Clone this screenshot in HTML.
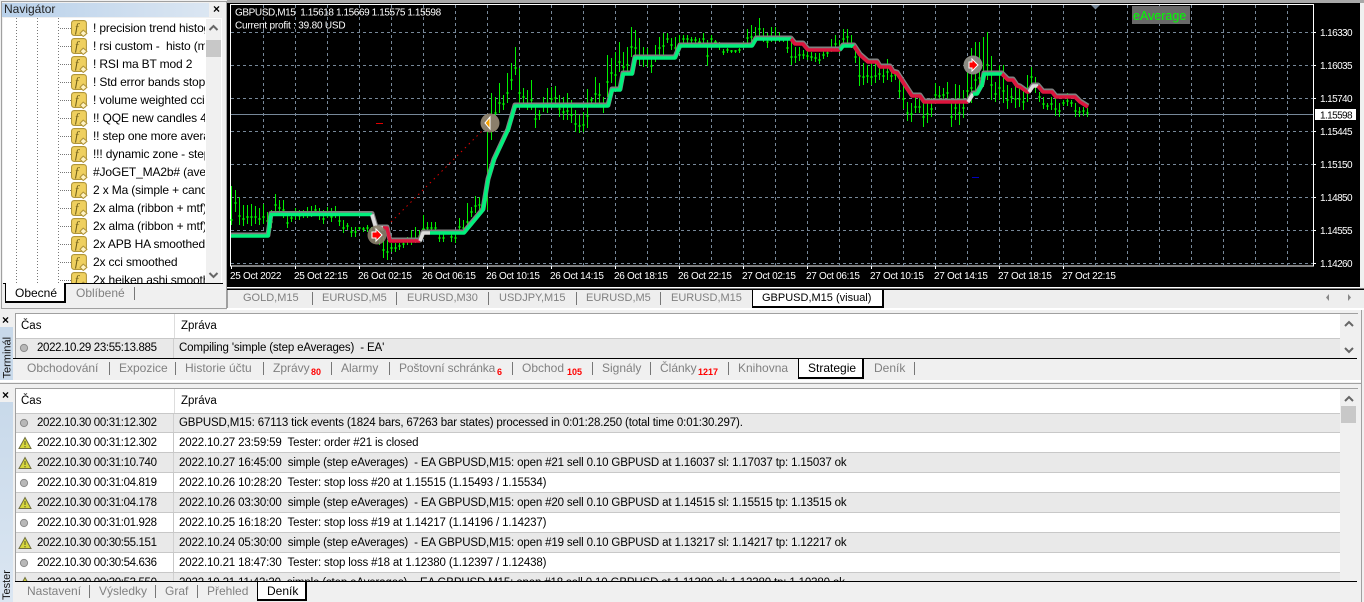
<!DOCTYPE html>
<html><head><meta charset="utf-8"><style>
html,body{margin:0;padding:0;width:1364px;height:602px;overflow:hidden;background:#f0f0f0;}
body{position:relative;font-family:"Liberation Sans",sans-serif;font-size:12px;color:#000;}
div,span,svg{position:absolute;}
.t{white-space:pre;line-height:14px;height:14px;}
.g{color:#808080;}
.sep{width:1px;background:#777;}
.b{color:#f00;font-weight:bold;font-size:9px;line-height:10px;white-space:pre;}
.ct{font-size:11px;}
.row{left:15px;width:1325px;height:19px;border-bottom:1px solid #c8c8c8;overflow:hidden;}
.row.e{background:#e9e9e9;}
.row .a{left:22px;top:3px;font-size:11.5px;letter-spacing:-.36px;}
.row .m{left:164px;top:3px;font-size:11.5px;letter-spacing:-.15px;}
.row .d{left:158px;top:0;width:1px;height:20px;background:#c8c8c8;}
.row.e .d{background:#d0d0d0;}
.nav{left:93px;width:112px;overflow:hidden;font-size:12px;letter-spacing:-.15px;line-height:18px;height:18px;white-space:pre;}
.act{background:#fff;border:1px solid #000;border-top:1px solid #000;border-right:2px solid #000;border-bottom:2px solid #000;box-sizing:border-box;}
</style></head><body>
<svg width="0" height="0" style="left:0;top:0">
<defs>
<symbol id="fi" viewBox="0 0 16 16"><rect x=".5" y=".5" width="14" height="14" rx="2.5" fill="#efd05f" stroke="#b0953a"/><text x="3.6" y="11.5" font-family="Liberation Serif" font-style="italic" font-size="12" fill="#6e5e18">f</text><path d="M11.5 9.5l3.5 3-3.5 3-3-3z" fill="#fff3c4" stroke="#b0953a"/></symbol>
<symbol id="w" viewBox="0 0 14 14"><path d="M7 1.5L13 12.5H1z" fill="#d6d63c" stroke="#6e6e40"/><path d="M7 5v4M7 10v1.4" stroke="#55552a"/></symbol>
<symbol id="c" viewBox="0 0 10 10"><circle cx="5" cy="5" r="3.6" fill="#b8b8b8" stroke="#8a8a8a"/></symbol>
</defs></svg>

<!-- Navigator -->
<div style="left:1px;top:1px;width:224px;height:306px;border:1px solid #a0a0a0;background:#f0f0f0"></div>
<div style="left:2px;top:3px;width:207px;height:14px;background:linear-gradient(90deg,#b9d1ea,#dbe6f2)"></div>
<div class="t" style="left:4px;top:2px;font-size:12px;color:#222">Navigátor</div>
<div class="t" style="left:213px;top:2px;font-weight:bold;font-size:12px">×</div>
<div style="left:3px;top:18px;width:219px;height:265px;background:#fff;overflow:hidden">
<svg width="219" height="265" style="left:0;top:0">
<path d="M13.5 0V265M34.5 0V265M55.5 0V265" stroke="#777" stroke-dasharray="1 2"/>
<path d="M57 10.500h11M57 28.500h11M57 46.500h11M57 64.500h11M57 82.500h11M57 100.500h11M57 118.500h11M57 136.500h11M57 154.500h11M57 172.500h11M57 190.500h11M57 208.500h11M57 226.500h11M57 244.500h11M57 262.500h11" stroke="#777" stroke-dasharray="1 1"/>
</svg>
<svg style="left:68px;top:2px" width="17" height="17"><use href="#fi"/></svg>
<svg style="left:68px;top:20px" width="17" height="17"><use href="#fi"/></svg>
<svg style="left:68px;top:38px" width="17" height="17"><use href="#fi"/></svg>
<svg style="left:68px;top:56px" width="17" height="17"><use href="#fi"/></svg>
<svg style="left:68px;top:74px" width="17" height="17"><use href="#fi"/></svg>
<svg style="left:68px;top:92px" width="17" height="17"><use href="#fi"/></svg>
<svg style="left:68px;top:110px" width="17" height="17"><use href="#fi"/></svg>
<svg style="left:68px;top:128px" width="17" height="17"><use href="#fi"/></svg>
<svg style="left:68px;top:146px" width="17" height="17"><use href="#fi"/></svg>
<svg style="left:68px;top:164px" width="17" height="17"><use href="#fi"/></svg>
<svg style="left:68px;top:182px" width="17" height="17"><use href="#fi"/></svg>
<svg style="left:68px;top:200px" width="17" height="17"><use href="#fi"/></svg>
<svg style="left:68px;top:218px" width="17" height="17"><use href="#fi"/></svg>
<svg style="left:68px;top:236px" width="17" height="17"><use href="#fi"/></svg>
<svg style="left:68px;top:254px" width="17" height="17"><use href="#fi"/></svg>
</div>
<div style="left:0;top:0;width:226px;height:283px;overflow:hidden">
<div class="nav" style="top:19px">! precision trend histogram</div>
<div class="nav" style="top:37px">! rsi custom -  histo (mtf)</div>
<div class="nav" style="top:55px">! RSI ma BT mod 2</div>
<div class="nav" style="top:73px">! Std error bands stop</div>
<div class="nav" style="top:91px">! volume weighted cci</div>
<div class="nav" style="top:109px">!! QQE new candles 4</div>
<div class="nav" style="top:127px">!! step one more average</div>
<div class="nav" style="top:145px">!!! dynamic zone - step</div>
<div class="nav" style="top:163px">#JoGET_MA2b# (average)</div>
<div class="nav" style="top:181px">2 x Ma (simple + candles)</div>
<div class="nav" style="top:199px">2x alma (ribbon + mtf)</div>
<div class="nav" style="top:217px">2x alma (ribbon + mtf)</div>
<div class="nav" style="top:235px">2x APB HA smoothed</div>
<div class="nav" style="top:253px">2x cci smoothed</div>
<div class="nav" style="top:271px">2x heiken ashi smoothed</div>
</div>
<div style="left:206px;top:19px;width:15px;height:264px;background:#f0f0f0"></div>
<div style="left:206px;top:40px;width:15px;height:17px;background:#c8c8c8"></div>
<svg style="left:206px;top:22px" width="15" height="262"><path d="M3.5 8l4-4 4 4" fill="none" stroke="#666" stroke-width="2"/><path d="M3.5 251l4 4 4-4" fill="none" stroke="#666" stroke-width="2"/></svg>
<div style="left:3px;top:283px;width:220px;height:1px;background:#000"></div>
<div class="act" style="left:5px;top:283px;width:61px;height:20px;border-top:0"></div>
<div class="t" style="left:15px;top:286px;font-size:12px">Obecné</div>
<div class="t g" style="left:76px;top:286px;font-size:12px">Oblíbené</div>
<div class="sep" style="left:134px;top:287px;height:13px"></div>

<!-- Chart -->
<svg style="left:227px;top:0" width="1137" height="291" viewBox="227 0 1137 291">
<rect x="227" y="0" width="1137" height="3" fill="#a8a8a8"/>
<rect x="227" y="3" width="1133" height="284" fill="#000"/>
<rect x="227" y="287" width="1133" height="1" fill="#fff"/>
<rect x="227" y="288.5" width="1137" height="1.5" fill="#000"/>
<rect x="230.5" y="4.5" width="1083" height="261.5" fill="none" stroke="#fff"/>
<path d="M231 32.5H1313M231 65.5H1313M231 98.5H1313M231 131.5H1313M231 164.5H1313M231 197.5H1313M231 230.5H1313M231 263.5H1313" stroke="#778899" stroke-dasharray="3 3"/>
<path d="M263.5 5V266M295.5 5V266M327.5 5V266M359.5 5V266M391.5 5V266M423.5 5V266M455.5 5V266M487.5 5V266M519.5 5V266M551.5 5V266M583.5 5V266M615.5 5V266M647.5 5V266M679.5 5V266M711.5 5V266M743.5 5V266M775.5 5V266M807.5 5V266M839.5 5V266M871.5 5V266M903.5 5V266M935.5 5V266M967.5 5V266M999.5 5V266M1031.5 5V266M1063.5 5V266M1095.5 5V266M1127.5 5V266M1159.5 5V266M1191.5 5V266M1223.5 5V266M1255.5 5V266M1287.5 5V266" stroke="#778899" stroke-dasharray="3 3"/>
<path d="M231 114.5H1313" stroke="#778899"/>
<path d="M1091 5h9l-4.500 4.500z" fill="#778899"/>
<path d="M231.500 266v3M295.500 266v3M359.500 266v3M423.500 266v3M487.500 266v3M551.500 266v3M615.500 266v3M679.500 266v3M743.500 266v3M807.500 266v3M871.500 266v3M935.500 266v3M999.500 266v3M1063.500 266v3" stroke="#fff"/>
<path d="M1313 32.500h3M1313 65.500h3M1313 98.500h3M1313 131.500h3M1313 164.500h3M1313 197.500h3M1313 230.500h3M1313 263.500h3" stroke="#fff"/>
<!-- bars -->
<path fill="none" stroke="#00f000" shape-rendering="crispEdges" d="M231.500 186V225m-1.500-5h3M235.500 190V212m-1.500-9h3M239.500 197V225m-1.500-9h3M243.500 205V226m-1.500-7h3M247.500 205V224m-1.500-7h3M251.500 204V226m-1.500-9h3M255.500 206V224m-1.500-7h3M259.500 208V225m-1.500-6h3M263.500 204V224m-1.500-7h3M267.500 212V226m-1.500-5h3M271.500 210V228m-1.500-6h3M275.500 194V214m-1.500-9h3M279.500 200V216m-1.500-8h3M283.500 200V218m-1.500-8h3M287.500 216V228m-1.500-5h3M291.500 212V222m-1.500-4h3M295.500 208V220m-1.500-5h3M299.500 210V220m-1.500-4h3M303.500 210V218m-1.500-4h3M307.500 207V218m-1.500-5h3M311.500 206V217m-1.500-5h3M315.500 205V215m-1.500-5h3M319.500 208V220m-1.500-5h3M323.500 210V224m-1.500-5h3M327.500 207V218m-1.500-5h3M331.500 208V222m-1.500-5h3M335.500 206V218m-1.500-5h3M339.500 212V226m-1.500-5h3M343.500 220V233m-1.500-5h3M347.500 223V230m-1.500-4h3M351.500 227V237m-1.500-5h3M355.500 227V237m-1.500-5h3M359.500 227V230m-1.500-2h3M363.500 227V232m-1.500-3h3M367.500 225V232m-1.500-4h3M371.500 227V237m-1.500-5h3M375.500 227V243m-1.500-6h3M379.500 230V245m-1.500-5h3M383.500 237V258m-1.500-8h3M387.500 240V260m-1.500-8h3M391.500 243V252m-1.500-4h3M395.500 243V252m-1.500-4h3M399.500 243V250m-1.500-4h3M403.500 240V248m-1.500-4h3M407.500 237V245m-1.500-4h3M411.500 230V245m-1.500-5h3M415.500 227V243m-1.500-5h3M419.500 230V240m-1.500-4h3M423.500 215V237m-1.500-8h3M427.500 222V232m-1.500-4h3M431.500 222V233m-1.500-5h3M435.500 222V233m-1.500-5h3M439.500 232V242m-1.500-4h3M443.500 232V242m-1.500-4h3M447.500 231V234m-1.500-2h3M451.500 230V242m-1.500-5h3M455.500 233V243m-1.500-5h3M459.500 218V233m-1.500-6h3M463.500 220V233m-1.500-5h3M467.500 203V230m-1.500-8h3M471.500 207V217m-1.500-5h3M475.500 196V213m-1.500-7h3M479.500 197V210m-1.500-5h3M483.500 200V210m-1.500-5h3M487.500 120V210M491.500 93V140m-1.500-20h3M495.500 97V123m-1.500-10h3M499.500 83V113m-1.500-10h3M503.500 95V110m-1.500-6h3M507.500 73V103m-1.500-10h3M511.500 63V90m-1.500-10h3M515.500 47V75m-1.500-7h3M519.500 68V105m-1.500-12h3M523.500 88V103m-1.500-6h3M527.500 90V110m-1.500-7h3M531.500 80V110m-1.500-10h3M535.500 105V128m-1.500-9h3M539.500 110V120m-1.500-5h3M543.500 97V112m-1.500-6h3M547.500 88V113m-1.500-9h3M551.500 87V107m-1.500-8h3M555.500 86V105m-1.500-7h3M559.500 95V117m-1.500-8h3M563.500 97V120m-1.500-8h3M567.500 93V120m-1.500-9h3M571.500 100V123m-1.500-8h3M575.500 110V132m-1.500-8h3M579.500 115V133m-1.500-7h3M583.500 112V132m-1.500-7h3M587.500 89V128m-1.500-12h3M591.500 97V103m-1.500-3h3M595.500 77V103m-1.500-9h3M599.500 83V103m-1.500-8h3M603.500 97V113m-1.500-6h3M607.500 55V97m-1.500-15h3M611.500 58V83m-1.500-10h3M615.500 52V87m-1.500-12h3M619.500 42V72m-1.500-10h3M623.500 52V77m-1.500-10h3M627.500 47V75m-1.500-10h3M631.500 27V57m-1.500-10h3M635.500 30V58m-1.500-10h3M639.500 38V65m-1.500-10h3M643.500 47V67m-1.500-8h3M647.500 48V67m-1.500-8h3M651.500 55V73m-1.500-7h3M655.500 45V62m-1.500-7h3M659.500 37V55m-1.500-7h3M663.500 33V55m-1.500-9h3M667.500 33V43m-1.500-4h3M671.500 38V50m-1.500-5h3M675.500 37V55m-1.500-7h3M679.500 35V50m-1.500-6h3M683.500 35V43m-1.500-4h3M687.500 35V43m-1.500-4h3M691.500 37V43m-1.500-3h3M695.500 37V43m-1.500-3h3M699.500 38V45m-1.500-3h3M703.500 33V43m-1.500-4h3M707.500 40V66m-1.500-10h3M711.500 35V43m-1.500-4h3M715.500 40V45m-1.500-3h3M719.500 42V50m-1.500-4h3M723.500 49V55m-1.500-3h3M727.500 48V53m-1.500-3h3M731.500 50V53m-1.500-2h3M735.500 50V53m-1.500-2h3M739.500 48V53m-1.500-3h3M743.500 42V48m-1.500-3h3M747.500 29V43m-1.500-5h3M751.500 25V45m-1.500-8h3M755.500 27V43m-1.500-6h3M759.500 18V37m-1.500-8h3M763.500 28V42m-1.500-6h3M767.500 33V48m-1.500-6h3M771.500 27V42m-1.500-6h3M775.500 27V42m-1.500-6h3M779.500 32V42m-1.500-5h3M783.500 38V42m-1.500-2h3M787.500 40V53m-1.500-5h3M791.500 42V65m-1.500-8h3M795.500 47V63m-1.500-6h3M799.500 47V61m-1.500-6h3M803.500 50V59m-1.500-4h3M807.500 50V60m-1.500-4h3M811.500 52V61m-1.500-4h3M815.500 53V62m-1.500-4h3M819.500 53V64m-1.500-4h3M823.500 50V59m-1.500-4h3M827.500 47V57m-1.500-4h3M831.500 39V52m-1.500-5h3M835.500 35V50m-1.500-6h3M839.500 40V53m-1.500-5h3M843.500 29V45m-1.500-6h3M847.500 29V43m-1.500-6h3M851.500 35V48m-1.500-5h3M855.500 47V63m-1.500-6h3M859.500 55V86m-1.500-10h3M863.500 63V85m-1.500-8h3M867.500 65V83m-1.500-7h3M871.500 62V85m-1.500-8h3M875.500 62V83m-1.500-7h3M879.500 65V80m-1.500-6h3M883.500 65V83m-1.500-7h3M887.500 59V80m-1.500-8h3M891.500 68V82m-1.500-6h3M895.500 70V80m-1.500-5h3M899.500 80V98m-1.500-7h3M903.500 83V109m-1.500-10h3M907.500 102V121m-1.500-8h3M911.500 103V122m-1.500-8h3M915.500 97V113m-1.500-6h3M919.500 98V113m-1.500-6h3M923.500 100V127m-1.500-10h3M927.500 100V123m-1.500-9h3M931.500 98V117m-1.500-8h3M935.500 83V103m-1.500-8h3M939.500 86V103m-1.500-7h3M943.500 88V100m-1.500-5h3M947.500 82V100m-1.500-7h3M951.500 100V127m-1.500-10h3M955.500 84V120m-1.500-12h3M959.500 85V125m-1.500-12h3M963.500 90V118m-1.500-10h3M967.500 65V103m-1.500-12h3M971.500 48V103m-1.500-15h3M975.500 42V95m-1.500-15h3M979.500 42V93m-1.500-15h3M983.500 37V87m-1.500-15h3M987.500 32V80m-1.500-15h3M991.500 56V100m-1.500-15h3M995.500 82V102m-1.500-8h3M999.500 65V100m-1.500-12h3M1003.500 65V103m-1.500-12h3M1007.500 85V109m-1.500-9h3M1011.500 88V103m-1.500-6h3M1015.500 85V108m-1.500-9h3M1019.500 88V107m-1.500-8h3M1023.500 90V110m-1.500-8h3M1027.500 75V102m-1.500-10h3M1031.500 67V90m-1.500-13h3M1035.500 77V93m-1.500-6h3M1039.500 92V102m-1.500-5h3M1043.500 97V109m-1.500-5h3M1047.500 103V110m-1.500-4h3M1051.500 97V110m-1.500-6h3M1055.500 98V116m-1.500-7h3M1059.500 103V117m-1.500-6h3M1063.500 100V106m-1.500-3h3M1067.500 93V106m-1.500-5h3M1071.500 100V107m-1.500-4h3M1075.500 103V117m-1.500-6h3M1079.500 107V117m-1.500-5h3M1083.500 107V116m-1.500-5h3M1087.500 108V117m-1.500-4h3"/>
<!-- gray under line -->
<polyline transform="translate(0,-1)" fill="none" stroke="#808080" stroke-width="5" stroke-linejoin="round" points="231,236 268,236 271,214.500 372,214.500 376,228 387,228 390,241 420,241 423,233 464,233 483,210 488,180 494,160 508,130 515,106 608,106 612,90 620,90 623,74 632,74 635,58 675,58 680,46 752,46 756,39 791,39 795,44 803,44 808,50 840,50 843,46 854,46 860,55 868,62 877,62 880,67 890,67 893,72 897,73 912,96 920,96 924,102 968,102 973,94 977,94 982,85 984,74 1002,74 1008,80 1013,80 1017,86 1020,87 1027,92 1029,92 1033,86 1038,86 1043,92 1052,92 1056,97 1075,97 1080,102 1088,107"/>
<polyline fill="none" stroke="#00f07c" stroke-width="3.500" stroke-linejoin="round" points="231,236 268,236 271,214.500 372,214.500"/>
<polyline fill="none" stroke="#dcdcdc" stroke-width="3.500" stroke-linejoin="round" points="372,214.500 376,228 383,228"/>
<polyline fill="none" stroke="#dc143c" stroke-width="3.500" stroke-linejoin="round" points="383,228 387,228 390,241 420,241"/>
<polyline fill="none" stroke="#dcdcdc" stroke-width="3.500" stroke-linejoin="round" points="420,241 423,233 430,233"/>
<polyline fill="none" stroke="#00f07c" stroke-width="3.500" stroke-linejoin="round" points="430,233 464,233 483,210 488,180 494,160 508,130 515,106 608,106 612,90 620,90 623,74 632,74 635,58 675,58 680,46 752,46 756,39 791,39"/>
<polyline fill="none" stroke="#dc143c" stroke-width="3.500" stroke-linejoin="round" points="791,39 795,44 803,44 808,50 840,50"/>
<polyline fill="none" stroke="#00f07c" stroke-width="3.500" stroke-linejoin="round" points="840,50 843,46 854,46"/>
<polyline fill="none" stroke="#dc143c" stroke-width="3.500" stroke-linejoin="round" points="854,46 860,55 868,62 877,62 880,67 890,67 893,72 897,73 912,96 920,96 924,102 968,102"/>
<polyline fill="none" stroke="#dcdcdc" stroke-width="3.500" stroke-linejoin="round" points="968,102 973,94"/>
<polyline fill="none" stroke="#00f07c" stroke-width="3.500" stroke-linejoin="round" points="973,94 977,94 982,85 984,74 1002,74"/>
<polyline fill="none" stroke="#dc143c" stroke-width="3.500" stroke-linejoin="round" points="1002,74 1008,80 1013,80 1017,86 1020,87 1027,92 1029,92"/>
<polyline fill="none" stroke="#dcdcdc" stroke-width="3.500" stroke-linejoin="round" points="1029,92 1033,86 1038,86"/>
<polyline fill="none" stroke="#dc143c" stroke-width="3.500" stroke-linejoin="round" points="1038,86 1043,92 1052,92 1056,97 1075,97 1080,102 1088,107"/>
<!-- trades -->
<path d="M391 222L485 128" stroke="#e00000" stroke-dasharray="1.500 4" fill="none"/>
<path d="M376 123.500h7" stroke="#e00000"/><path d="M972 177.500h7" stroke="#0000c0"/>
<circle cx="377" cy="235" r="9.500" fill="#8b7f6b" fill-opacity=".9"/>
<path d="M372 232h4v-3l6 6-6 6v-3h-4z" fill="#f00" stroke="#fff"/>
<circle cx="490" cy="123" r="9.500" fill="#8b7f6b"/>
<path d="M485 123l5-6v12z" fill="#f5a000" stroke="#fff"/>
<circle cx="973" cy="65" r="9.500" fill="#8b8b83"/>
<path d="M969 62h3v-3l6 6-6 6v-3h-3z" fill="#f00" stroke="#fff"/>
<!-- labels -->
<rect x="1132" y="6" width="58" height="18" fill="#696969"/>
<text x="1133" y="20" font-size="12.500" fill="#00ff00" font-family="Liberation Sans">eAverage</text>
<g font-family="Liberation Sans" font-size="10" fill="#fff">
<text x="235" y="15.500" letter-spacing="-.4" xml:space="preserve">GBPUSD,M15  1.15618 1.15669 1.15575 1.15598</text>
<text x="235" y="28.500" letter-spacing="-.2">Current profit : 39.80 USD</text>
<g letter-spacing="-.6">
<text x="1320" y="36">1.16330</text><text x="1320" y="69">1.16035</text><text x="1320" y="102">1.15740</text><text x="1320" y="135">1.15445</text><text x="1320" y="168">1.15150</text><text x="1320" y="201">1.14850</text><text x="1320" y="234">1.14555</text><text x="1320" y="267">1.14260</text>
</g>
<rect x="1315" y="109" width="41" height="11" fill="#fff"/>
<text x="1320" y="118.500" letter-spacing="-.6" fill="#000">1.15598</text>
<g letter-spacing="-.3">
<text x="230" y="279">25 Oct 2022</text><text x="294" y="279">25 Oct 22:15</text><text x="358" y="279">26 Oct 02:15</text><text x="422" y="279">26 Oct 06:15</text><text x="486" y="279">26 Oct 10:15</text><text x="550" y="279">26 Oct 14:15</text><text x="614" y="279">26 Oct 18:15</text><text x="678" y="279">26 Oct 22:15</text><text x="742" y="279">27 Oct 02:15</text><text x="806" y="279">27 Oct 06:15</text><text x="870" y="279">27 Oct 10:15</text><text x="934" y="279">27 Oct 14:15</text><text x="998" y="279">27 Oct 18:15</text><text x="1062" y="279">27 Oct 22:15</text>
</g></g>
</svg>

<!-- Chart tabs -->
<div style="left:227px;top:290px;width:1137px;height:18px;background:#eee"></div>
<div style="left:227px;top:290px;width:1px;height:18px;background:#a0a0a0"></div>
<div style="left:227px;top:308px;width:1137px;height:2px;background:#fff"></div>
<div class="t g ct" style="left:243px;top:291px">GOLD,M15</div><div class="sep" style="left:312px;top:292px;height:13px"></div>
<div class="t g ct" style="left:322px;top:291px">EURUSD,M5</div><div class="sep" style="left:396px;top:292px;height:13px"></div>
<div class="t g ct" style="left:407px;top:291px">EURUSD,M30</div><div class="sep" style="left:488px;top:292px;height:13px"></div>
<div class="t g ct" style="left:499px;top:291px">USDJPY,M15</div><div class="sep" style="left:576px;top:292px;height:13px"></div>
<div class="t g ct" style="left:586px;top:291px">EURUSD,M5</div><div class="sep" style="left:660px;top:292px;height:13px"></div>
<div class="t g ct" style="left:671px;top:291px">EURUSD,M15</div>
<div class="act" style="left:752px;top:289px;width:132px;height:19px;border-bottom:2px solid #000"></div>
<div class="t ct" style="left:762px;top:291px">GBPUSD,M15 (visual)</div>
<svg style="left:1325px;top:292px" width="30" height="12"><path d="M4 2v7l-3-3.500z" fill="#888"/><path d="M23 2v7l3-3.500z" fill="#888"/></svg>

<!-- Terminal -->
<div style="left:0;top:310px;width:1364px;height:73px;background:#f0f0f0"></div>
<div style="left:1361px;top:310px;width:1px;height:292px;background:#a0a0a0"></div>
<div style="left:15px;top:313px;width:1343px;height:1px;background:#a0a0a0"></div>
<div style="left:15px;top:313px;width:1px;height:46px;background:#a0a0a0"></div>
<div style="left:16px;top:314px;width:1324px;height:24px;background:#fff"></div>
<div style="left:174px;top:314px;width:1px;height:24px;background:#ddd"></div>
<div class="t" style="left:21px;top:319px;font-size:11.500px">Čas</div>
<div class="t" style="left:181px;top:319px;font-size:11.500px">Zpráva</div>
<div style="left:16px;top:338px;width:1324px;height:1px;background:#c8c8c8"></div>
<div class="row e" style="left:16px;top:339px;width:1324px;height:19px;border:0">
<svg style="left:3px;top:4px" width="10" height="10"><use href="#c"/></svg>
<div class="t a" style="left:21px;top:2px">2022.10.29 23:55:13.885</div>
<div class="d" style="left:157px"></div>
<div class="t m" style="left:163px;top:2px">Compiling 'simple (step eAverages)  - EA'</div>
</div>
<div style="left:13px;top:358px;width:1344px;height:1px;background:#000"></div>
<div style="left:1341px;top:314px;width:16px;height:44px;background:#f0f0f0"></div>
<svg style="left:1341px;top:318px" width="16" height="40"><path d="M4 8l4-4 4 4M4 30l4 4 4-4" fill="none" stroke="#666" stroke-width="2"/></svg>
<div class="t" style="left:2px;top:313px;font-weight:bold;font-size:12px">×</div>
<div style="left:0;top:327px;width:13px;height:53px;background:#c8d9ea"></div>
<div class="t" style="left:-19.500px;top:345px;width:53px;font-size:11px;transform:rotate(-90deg);text-align:left;color:#111">Terminál</div>
<div class="t g" style="left:27px;top:361px">Obchodování</div><div class="sep" style="left:109px;top:362px;height:13px"></div>
<div class="t g" style="left:119px;top:361px">Expozice</div><div class="sep" style="left:175px;top:362px;height:13px"></div>
<div class="t g" style="left:185px;top:361px">Historie účtu</div><div class="sep" style="left:263px;top:362px;height:13px"></div>
<div class="t g" style="left:273px;top:361px">Zprávy</div><div class="b" style="left:311px;top:367px">80</div><div class="sep" style="left:331px;top:362px;height:13px"></div>
<div class="t g" style="left:341px;top:361px">Alarmy</div><div class="sep" style="left:389px;top:362px;height:13px"></div>
<div class="t g" style="left:399px;top:361px;letter-spacing:-.15px">Poštovní schránka</div><div class="b" style="left:497px;top:367px">6</div><div class="sep" style="left:512px;top:362px;height:13px"></div>
<div class="t g" style="left:522px;top:361px">Obchod</div><div class="b" style="left:567px;top:367px">105</div><div class="sep" style="left:592px;top:362px;height:13px"></div>
<div class="t g" style="left:602px;top:361px">Signály</div><div class="sep" style="left:650px;top:362px;height:13px"></div>
<div class="t g" style="left:660px;top:361px">Články</div><div class="b" style="left:698px;top:367px">1217</div><div class="sep" style="left:728px;top:362px;height:13px"></div>
<div class="t g" style="left:738px;top:361px">Knihovna</div>
<div class="act" style="left:798px;top:358px;width:66px;height:21px"></div>
<div class="t" style="left:808px;top:361px">Strategie</div>
<div class="t g" style="left:874px;top:361px">Deník</div><div class="sep" style="left:914px;top:362px;height:13px"></div>
<div style="left:0;top:380px;width:1361px;height:2px;background:#fff"></div>
<div style="left:0;top:383px;width:1361px;height:1px;background:#a0a0a0"></div>

<!-- Tester -->
<div style="left:15px;top:388px;width:1343px;height:1px;background:#a0a0a0"></div>
<div style="left:15px;top:388px;width:1px;height:193px;background:#a0a0a0"></div>
<div style="left:16px;top:389px;width:1324px;height:24px;background:#fff"></div>
<div style="left:174px;top:389px;width:1px;height:24px;background:#ddd"></div>
<div class="t" style="left:21px;top:394px;font-size:11.500px">Čas</div>
<div class="t" style="left:181px;top:394px;font-size:11.500px">Zpráva</div>

<div style="left:16px;top:413px;width:1324px;height:168px;overflow:hidden;background:#fff">
<div class="row e" style="left:0;top:0;width:1324px"><svg style="left:3px;top:5px" width="10" height="10"><use href="#c"/></svg><div class="t a" style="left:21px">2022.10.30 00:31:12.302</div><div class="d" style="left:157px"></div><div class="t m" style="left:163px">GBPUSD,M15: 67113 tick events (1824 bars, 67263 bar states) processed in 0:01:28.250 (total time 0:01:30.297).</div></div>
<div class="row" style="left:0;top:20px;width:1324px"><svg style="left:2px;top:3px" width="14" height="14"><use href="#w"/></svg><div class="t a" style="left:21px">2022.10.30 00:31:12.302</div><div class="d" style="left:157px"></div><div class="t m" style="left:163px">2022.10.27 23:59:59  Tester: order #21 is closed</div></div>
<div class="row e" style="left:0;top:40px;width:1324px"><svg style="left:2px;top:3px" width="14" height="14"><use href="#w"/></svg><div class="t a" style="left:21px">2022.10.30 00:31:10.740</div><div class="d" style="left:157px"></div><div class="t m" style="left:163px">2022.10.27 16:45:00  simple (step eAverages)  - EA GBPUSD,M15: open #21 sell 0.10 GBPUSD at 1.16037 sl: 1.17037 tp: 1.15037 ok</div></div>
<div class="row" style="left:0;top:60px;width:1324px"><svg style="left:3px;top:5px" width="10" height="10"><use href="#c"/></svg><div class="t a" style="left:21px">2022.10.30 00:31:04.819</div><div class="d" style="left:157px"></div><div class="t m" style="left:163px">2022.10.26 10:28:20  Tester: stop loss #20 at 1.15515 (1.15493 / 1.15534)</div></div>
<div class="row e" style="left:0;top:80px;width:1324px"><svg style="left:2px;top:3px" width="14" height="14"><use href="#w"/></svg><div class="t a" style="left:21px">2022.10.30 00:31:04.178</div><div class="d" style="left:157px"></div><div class="t m" style="left:163px">2022.10.26 03:30:00  simple (step eAverages)  - EA GBPUSD,M15: open #20 sell 0.10 GBPUSD at 1.14515 sl: 1.15515 tp: 1.13515 ok</div></div>
<div class="row" style="left:0;top:100px;width:1324px"><svg style="left:3px;top:5px" width="10" height="10"><use href="#c"/></svg><div class="t a" style="left:21px">2022.10.30 00:31:01.928</div><div class="d" style="left:157px"></div><div class="t m" style="left:163px">2022.10.25 16:18:20  Tester: stop loss #19 at 1.14217 (1.14196 / 1.14237)</div></div>
<div class="row e" style="left:0;top:120px;width:1324px"><svg style="left:2px;top:3px" width="14" height="14"><use href="#w"/></svg><div class="t a" style="left:21px">2022.10.30 00:30:55.151</div><div class="d" style="left:157px"></div><div class="t m" style="left:163px">2022.10.24 05:30:00  simple (step eAverages)  - EA GBPUSD,M15: open #19 sell 0.10 GBPUSD at 1.13217 sl: 1.14217 tp: 1.12217 ok</div></div>
<div class="row" style="left:0;top:140px;width:1324px"><svg style="left:3px;top:5px" width="10" height="10"><use href="#c"/></svg><div class="t a" style="left:21px">2022.10.30 00:30:54.636</div><div class="d" style="left:157px"></div><div class="t m" style="left:163px">2022.10.21 18:47:30  Tester: stop loss #18 at 1.12380 (1.12397 / 1.12438)</div></div>
<div class="row e" style="left:0;top:160px;width:1324px"><svg style="left:2px;top:3px" width="14" height="14"><use href="#w"/></svg><div class="t a" style="left:21px">2022.10.30 00:30:53.550</div><div class="d" style="left:157px"></div><div class="t m" style="left:163px">2022.10.21 11:42:30  simple (step eAverages)  - EA GBPUSD,M15: open #18 sell 0.10 GBPUSD at 1.11380 sl: 1.12380 tp: 1.10380 ok</div></div>
</div>
<div style="left:16px;top:413px;width:1324px;height:1px;background:#c8c8c8"></div>

<div style="left:1341px;top:389px;width:16px;height:192px;background:#f0f0f0"></div>
<div style="left:1341px;top:406px;width:15px;height:17px;background:#c8c8c8"></div>
<svg style="left:1341px;top:393px" width="16" height="12"><path d="M4 8l4-4 4 4" fill="none" stroke="#666" stroke-width="2"/></svg>
<div class="t" style="left:2px;top:388px;font-weight:bold;font-size:12px">×</div>
<div style="left:0;top:402px;width:13px;height:200px;background:linear-gradient(180deg,#c8d9ea,#dbe6f2)"></div>
<div class="t" style="left:-15px;top:571px;width:44px;font-size:11px;transform:rotate(-90deg);color:#111;text-align:left">Tester</div>

<div style="left:13px;top:581px;width:1344px;height:21px;background:#f0f0f0"></div>
<div style="left:15px;top:581px;width:1342px;height:1px;background:#000"></div>
<div class="t g" style="left:27px;top:584px">Nastavení</div><div class="sep" style="left:89px;top:585px;height:13px"></div>
<div class="t g" style="left:99px;top:584px">Výsledky</div><div class="sep" style="left:155px;top:585px;height:13px"></div>
<div class="t g" style="left:165px;top:584px">Graf</div><div class="sep" style="left:197px;top:585px;height:13px"></div>
<div class="t g" style="left:207px;top:584px">Přehled</div>
<div class="act" style="left:257px;top:581px;width:50px;height:20px"></div>
<div class="t" style="left:267px;top:584px">Deník</div>
</body></html>
